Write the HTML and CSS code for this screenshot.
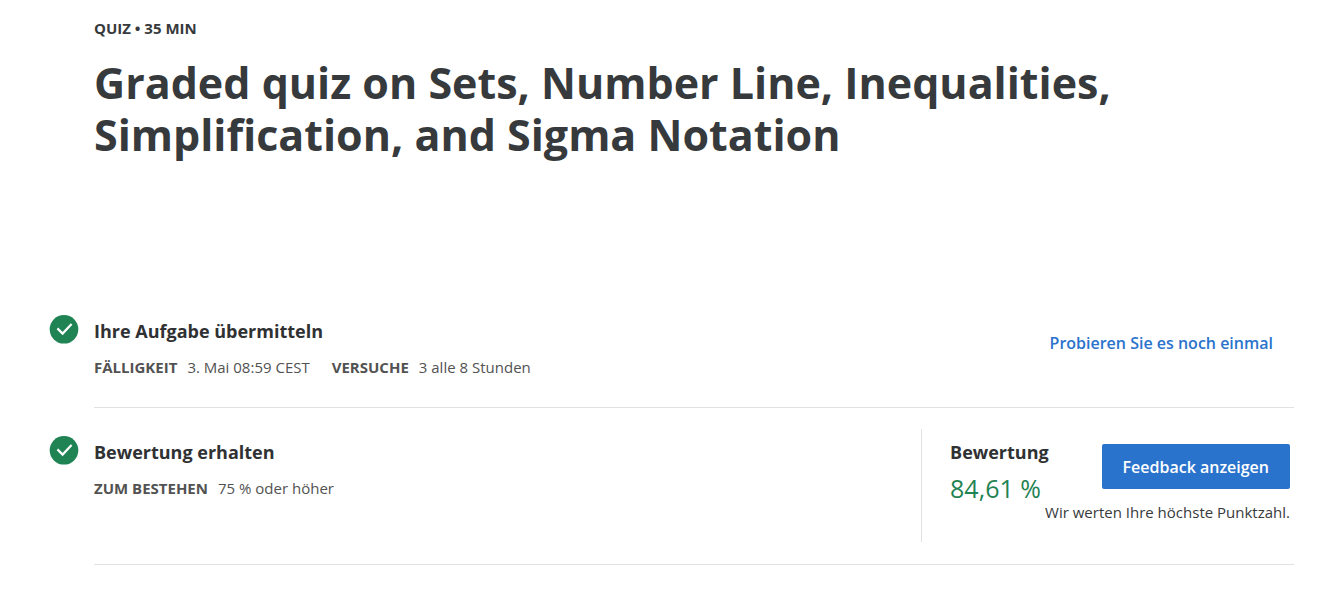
FILE: index.html
```html
<!DOCTYPE html>
<html lang="de">
<head>
<meta charset="utf-8">
<title>Graded quiz</title>
<link rel="stylesheet" href="styles.css">
</head>
<body>
<main class="page">
  <header class="header">
    <p class="kind">QUIZ • 35 MIN</p>
    <h1 class="title">Graded quiz on Sets, Number Line, Inequalities, Simplification, and Sigma Notation</h1>
  </header>
  <section class="step">
    <svg class="check" viewBox="0 0 28 28" aria-hidden="true"><circle cx="14" cy="14.3" r="14.3" fill="#1f8354"/><path d="M7.4 13.4l5.2 5.2 9-9.6" fill="none" stroke="#fff" stroke-width="2.2"/></svg>
    <div class="row">
      <div class="info">
        <h2 class="heading">Ihre Aufgabe übermitteln</h2>
        <dl class="facts">
          <div class="fact"><dt>FÄLLIGKEIT</dt><dd>3. Mai 08:59 CEST</dd></div>
          <div class="fact"><dt>VERSUCHE</dt><dd>3 alle 8 Stunden</dd></div>
        </dl>
      </div>
      <a class="retry" href="#">Probieren Sie es noch einmal</a>
    </div>
  </section>
  <section class="step graded">
    <svg class="check" viewBox="0 0 28 28" aria-hidden="true"><circle cx="14" cy="14.3" r="14.3" fill="#1f8354"/><path d="M7.4 13.4l5.2 5.2 9-9.6" fill="none" stroke="#fff" stroke-width="2.2"/></svg>
    <div class="row">
      <div class="info">
        <h2 class="heading">Bewertung erhalten</h2>
        <dl class="facts">
          <div class="fact"><dt>ZUM BESTEHEN</dt><dd>75 % oder höher</dd></div>
        </dl>
      </div>
      <div class="result">
        <div class="grade">
          <h2 class="heading">Bewertung</h2>
          <p class="score">84,61 %</p>
        </div>
        <div class="feedback">
          <button class="button" type="button">Feedback anzeigen</button>
          <p class="note">Wir werten Ihre höchste Punktzahl.</p>
        </div>
      </div>
    </div>
  </section>
</main>
</body>
</html>
```
FILE: styles.css
```css
* { box-sizing: border-box; }
body, h1, h2, p, dl, dd { margin: 0; }
body {
  background: #fff;
  color: #373a3c;
  font-family: "Open Sans", sans-serif;
  font-size: 15px;
  line-height: 24px;
}
.page { padding: 16px 42px 24px 50px; }
.header { padding-left: 44px; margin-bottom: 146px; }
.kind { font-weight: 700; }
.title {
  max-width: 1060px;
  margin-top: 17px;
  font-size: 43px;
  font-weight: 700;
  line-height: 52px;
}
.step { display: flex; gap: 16px; }
.check { flex: none; width: 28px; height: 28px; margin-top: 8px; overflow: visible; }
.row {
  display: flex;
  flex: 1;
  justify-content: space-between;
  border-bottom: 1px solid #e1e1e1;
}
.info { padding: 12px 0 28px; }
.graded .check { margin-top: 28px; }
.graded .info { padding-top: 32px; }
.heading { color: #2f3133; font-size: 18px; font-weight: 700; line-height: 24px; }
.facts { display: flex; gap: 22px; margin-top: 12px; color: #525252; }
.fact { display: flex; gap: 10px; }
.fact dt { font-weight: 700; }
.retry {
  margin: 24px 21px 0 0;
  color: #2a73cc;
  font-size: 16px;
  font-weight: 600;
  text-decoration: none;
}
.result {
  display: flex;
  margin: 21px 4px 22px 0;
  padding-left: 28px;
  border-left: 1px solid #e1e1e1;
}
.grade { width: 95px; padding: 11px 0; white-space: nowrap; }
.score { margin-top: 8px; color: #1f8354; font-size: 25px; line-height: 32px; }
.feedback {
  display: flex;
  flex-direction: column;
  align-items: flex-end;
  padding: 15px 0 18px;
}
.button {
  height: 45px;
  padding: 0 21px;
  border: 0;
  border-radius: 2px;
  background: #2a73cc;
  color: #fff;
  font: 600 16px/24px "Open Sans", sans-serif;
}
.note { margin-top: 11px; color: #373a3c; }
```
